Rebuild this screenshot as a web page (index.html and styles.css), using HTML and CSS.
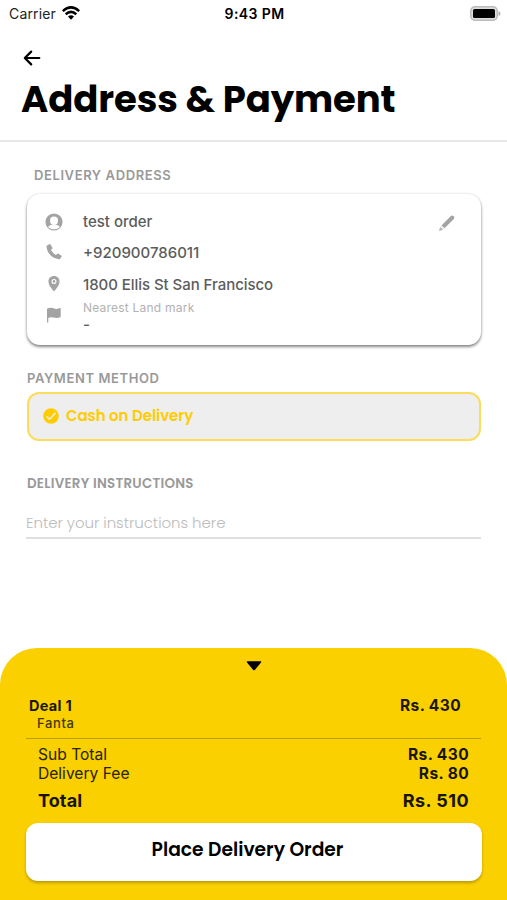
FILE: index.html
```html
<!DOCTYPE html>
<html lang="en">
<head>
<meta charset="utf-8">
<meta name="viewport" content="width=device-width, initial-scale=1">
<title>Address &amp; Payment</title>
<link rel="stylesheet" href="styles.css">
</head>
<body>
<div class="screen">
  <div class="status">
    <div class="carrier"><span class="carrier-name">Carrier</span>
      <svg class="wifi" viewBox="0 0 18 14" width="18" height="14"><g fill="none" stroke="#000" stroke-width="2.500"><path d="M.8 5.1Q9-2.3 17.2 5.1"/><path d="M3.700 8.200Q9 3.500 14.300 8.200"/></g><path d="M6 10.400Q9 8 12 10.400L9 13.700z"/></svg>
    </div>
    <span class="time">9:43 PM</span>
    <svg class="battery" viewBox="0 0 31 15" width="31" height="15"><rect x=".8" y=".8" width="26.4" height="13.4" rx="4" fill="#ddd" stroke="#bbb" stroke-width="1.5"/><rect x="3" y="3" width="22" height="9" rx="1.5"/><path d="M28.5 5Q30.5 5.500 30.500 7.500T28.500 10z" fill="#b0b0b0"/></svg>
  </div>
  <header class="header">
    <svg class="back" viewBox="0 0 18 16" width="18" height="16" fill="none" stroke="#000" stroke-width="2.2" stroke-linecap="round" stroke-linejoin="round"><path d="M16.300 8H2M8.200 1.600L1.800 8L8.200 14.400"/></svg>
    <h1 class="title">Address &amp; Payment</h1>
  </header>
  <main class="content">
    <h2 class="label label-address">DELIVERY ADDRESS</h2>
    <section class="card">
      <ul class="details">
        <li class="row"><svg class="icon" viewBox="0 0 18 18"><circle cx="9" cy="9" r="7.900" fill="#fff" stroke="#a3a3a3" stroke-width="1.300"/><path fill="#a3a3a3" d="M9 1a8 8 0 0 0-6.300 13C4 12.500 6.500 12.300 9 12.300s5 .2 6.300 1.700A8 8 0 0 0 9 1z"/><ellipse cx="9" cy="7.700" rx="4" ry="4.200" fill="#fff"/><path d="M3.300 14Q5 12.300 7 11.800L9 12.400 11 11.800Q13 12.300 14.700 14 12.500 16.300 9 16.300T3.300 14z" fill="#fff"/></svg><span class="text">test order</span></li>
        <li class="row"><svg class="icon" viewBox="0 0 18 18" fill="#a3a3a3"><path d="M2 1.500L4.300.2Q5-.1 5.500.6L7.300 3.500Q7.700 4.300 7 4.900L5.900 6.100Q7.600 9 10.900 11L12.100 9.900Q12.700 9.400 13.400 9.800L16.200 11.500Q16.900 12 16.500 12.700L15.200 14.700Q14.800 15.200 14 15.200C7 14.300 2.500 9.500 1.500 2.900Q1.400 1.900 2 1.500z"/></svg><span class="text">+920900786011</span></li>
        <li class="row"><svg class="icon" viewBox="0 0 18 18" fill="#a3a3a3"><path fill-rule="evenodd" d="M9 1C5.600 1 3.500 3.300 3.500 6.400 3.500 10.200 7 14 9 16.500 11 14 14.500 10.200 14.500 6.400 14.500 3.300 12.400 1 9 1zM9 3.900a2.500 2.500 0 1 1 0 5 2.500 2.500 0 0 1 0-5z"/><circle cx="9" cy="6.400" r="1.300"/></svg><span class="text street">1800 Ellis St San Francisco</span></li>
        <li class="row"><svg class="icon" viewBox="0 0 18 18" fill="#a3a3a3"><path d="M2 2.700C5 .8 7.500 1.900 10 2.700Q12 3.300 15.700 2.100V11.100Q12 12.600 8.500 11.500Q5.500 10.700 3.300 11.900V16.500H2z"/></svg><span class="stack"><span class="hint">Nearest Land mark</span><span class="text">-</span></span></li>
      </ul>
      <svg class="edit" viewBox="0 0 18 18" width="18" height="18"><path d="M3.500 11.500L12.900 2.100Q14.200.8 15.600 2.200T15.900 4.900L6.500 14.300z" fill="#a3a3a3"/><path d="M2.100 12.900L1 17 5.100 15.800z" fill="#b5b5b5"/><path d="M3.200 12L6 14.800" stroke="#e5e5e5" stroke-width="1.500"/></svg>
    </section>
    <h2 class="label label-payment">PAYMENT METHOD</h2>
    <div class="method">
      <svg viewBox="0 0 16 16" width="16" height="16"><circle cx="8" cy="8" r="7.800" fill="#fc0"/><path d="M3.600 8.400L6.500 11.200 12.500 4.900" fill="none" stroke="#eee" stroke-width="1.500"/></svg>
      <span class="method-name">Cash on Delivery</span>
    </div>
    <h2 class="label label-instructions">DELIVERY INSTRUCTIONS</h2>
    <div class="input"><span class="placeholder">Enter your instructions here</span></div>
  </main>
  <footer class="summary">
    <svg class="toggle" viewBox="0 0 16 10" width="16" height="10"><path d="M1.500.3H14.500Q15.800.5 15 1.600L9 8.800Q8 9.800 7 8.800L1 1.600Q.2.5 1.500.3z"/></svg>
    <div class="item"><div class="item-names"><span class="deal">Deal 1</span><span class="addon">Fanta</span></div><span class="amount">Rs. 430</span></div>
    <div class="line first"><span class="line-name">Sub Total</span><span class="amount">Rs. 430</span></div>
    <div class="line"><span class="line-name">Delivery Fee</span><span class="amount">Rs. 80</span></div>
    <div class="line total"><span class="total-name">Total</span><span class="total-amount">Rs. 510</span></div>
    <button class="order"><span class="order-text">Place Delivery Order</span></button>
  </footer>
</div>
</body>
</html>
```
FILE: styles.css
```css
* { box-sizing: border-box; }
body { margin: 0; background: #fff; font-family: Inter, "Liberation Sans", sans-serif; color: #000; }
h1, h2, ul { margin: 0; padding: 0; }
svg { display: block; flex: none; }
.screen { width: 507px; height: 900px; display: flex; flex-direction: column; white-space: nowrap; overflow: hidden; }
.status { height: 28px; display: grid; grid-template-columns: 1fr auto 1fr; align-items: center; padding: 0 7px 1px 9px; font-size: 14px; }
.carrier { display: flex; align-items: center; gap: 6px; color: #222; }
.carrier-name { letter-spacing: .15px; }
.wifi { margin-top: -2px; }
.time { font-weight: 600; letter-spacing: .4px; }
.battery { justify-self: end; margin: -1px -1px 0 0; }
.header { height: 114px; padding: 22px 21px 0; border-bottom: 2px solid #e7e7e7; }
.back { margin-left: 2px; }
.title { margin-top: 10px; font-family: Poppins, Inter, sans-serif; font-size: 37px; line-height: 46px; font-weight: 700; letter-spacing: -.1px; }
.content { flex: 1; padding: 25px 26px 0; }
.label { font-size: 13px; line-height: 16px; font-weight: 600; color: #999; }
.label-address { margin-left: 8px; letter-spacing: .6px; }
.card { height: 151px; margin: 11px 0 0 1px; width: 454px; border-radius: 13px; background: #fff; box-shadow: 0 2px 3px rgba(0,0,0,.45), 0 0 3px rgba(0,0,0,.12); display: flex; justify-content: space-between; padding: 12px 24px 0 18px; }
.details { list-style: none; }
.row { display: flex; height: 31px; align-items: center; gap: 20px; color: #5c5c5c; }
.icon { width: 18px; height: 18px; }
.text { font-size: 15px; line-height: 18px; font-weight: 500; }
.street { padding-top: 2px; letter-spacing: -.05px; }
.stack { display: flex; flex-direction: column; padding-top: 4px; }
.hint { font-size: 12px; line-height: 16px; color: #b2b2b2; letter-spacing: .22px; }
.edit { margin-top: 8px; margin-right: 1px; }
.label-payment { margin: 25px 0 0 1px; letter-spacing: .6px; }
.method { width: 454px; height: 49px; margin: 6px 0 0 1px; border: 2px solid #fbdc5c; border-radius: 12px; background: #eee; display: flex; align-items: center; gap: 7px; padding: 0 14px 2px; }
.method-name { font-family: Poppins, Inter, sans-serif; font-size: 15px; font-weight: 600; color: #fc0; letter-spacing: -.05px; }
.label-instructions { margin: 35px 0 0 1px; font-family: Poppins, Inter, sans-serif; font-size: 13.400px; letter-spacing: .27px; }
.input { height: 47px; border-bottom: 2px solid #e0e0e0; padding-top: 20px; line-height: 20px; }
.placeholder { font-family: Poppins, Inter, sans-serif; font-size: 15px; font-weight: 300; color: #bcbcbc; letter-spacing: -.07px; }
.summary { height: 252px; background: #fad000; border-radius: 37px 37px 0 0; padding: 13px 26px 0; }
.toggle { margin: 0 auto; }
.item { height: 68px; padding: 26px 20px 0 3px; display: flex; justify-content: space-between; border-bottom: 1px solid #b89d1c; color: #1b1700; }
.item-names { display: flex; flex-direction: column; }
.deal { font-size: 14.500px; line-height: 18px; font-weight: 700; letter-spacing: .3px; }
.addon { margin-left: 8px; font-size: 13px; line-height: 17px; font-weight: 500; color: #443900; letter-spacing: .6px; }
.amount { font-size: 15.500px; line-height: 18px; font-weight: 650; letter-spacing: .4px; }
.line { height: 19px; padding: 0 12px; display: flex; justify-content: space-between; align-items: center; font-size: 16px; color: #292300; }
.line .amount { margin-top: -2px; color: #171400; }
.line-name { font-size: 15.6px; margin-top: -2px; }
.first { margin-top: 7px; }
.total { height: 33px; font-size: 18px; font-weight: 650; color: #171400; }
.total-name { letter-spacing: .1px; }
.total-amount { letter-spacing: .45px; }
.order { display: flex; align-items: center; justify-content: center; width: 456px; height: 58px; margin-top: 6px; border: 0; padding: 0 13px 5px 0; border-radius: 12px; background: #fff; box-shadow: 0 2px 3px rgba(0,0,0,.25); color: #000; }
.order-text { font-family: Poppins, Inter, sans-serif; font-size: 18.700px; font-weight: 600; }
```
